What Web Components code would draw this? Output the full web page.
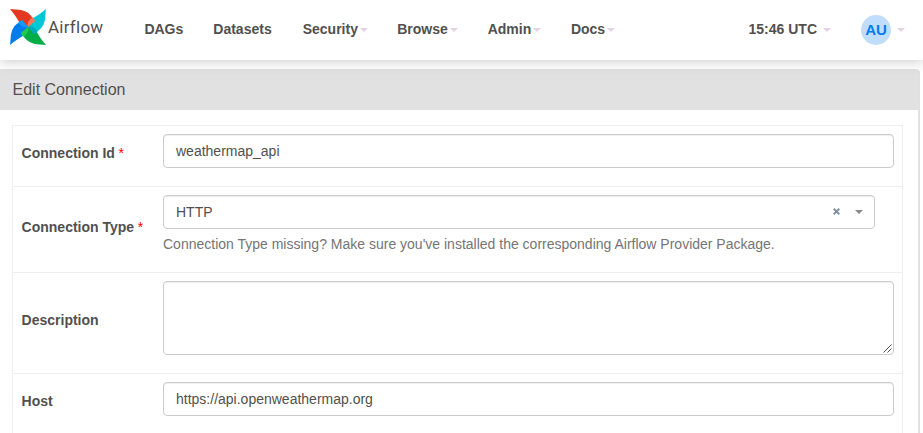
<!DOCTYPE html>
<html lang="en"><head><meta charset="utf-8"><title>Airflow</title>
<style>
html,body{margin:0;height:433px;overflow:hidden;background:#fff}
body{font:14px/20px "Liberation Sans",Arial,sans-serif;color:#51504f}
</style></head><body>
<af-app></af-app>
<script>
const define=(name,html,setup)=>customElements.define(name,class extends HTMLElement{
  constructor(){super();const t=document.createElement('template');t.innerHTML=html;
    this.attachShadow({mode:'open'}).append(t.content.cloneNode(true));}
  connectedCallback(){if(setup)setup(this,this.shadowRoot)}
});

define('af-logo',`<style>
:host{display:flex;align-items:center;width:135px;padding-left:10px;box-sizing:border-box;height:60px}
svg{width:36px;height:36px;flex:none;margin-top:-6px}
span{font:17px/20px Roboto,sans-serif;letter-spacing:.25px;margin:-6px 0 0 2px;white-space:nowrap}
</style>
<svg viewBox="-54 -54 108 108">
<defs><path id="b" d="M-54-54C-44-52-28-53-18-50C-2-46 8-38 15-25L0 0C-10-3-20-6-26-14C-34-28-42-40-54-54Z"/>
<path id="s" d="M0 0C-4-12 2-21 14-29C19-25 20-20 21-17C14-11 7-6 0 0Z"/></defs>
<use href="#b" fill="#e43921"/><use href="#b" fill="#00c7d4" transform="rotate(90)"/>
<use href="#b" fill="#00ad46" transform="rotate(180)"/><use href="#b" fill="#017cee" transform="rotate(270)"/>
<use href="#s" fill="#ff7557"/><use href="#s" fill="#00a9b5" transform="rotate(90)"/>
<use href="#s" fill="#22c94f" transform="rotate(180)"/><use href="#s" fill="#0c9cff" transform="rotate(270)"/>
</svg><span>Airflow</span>`);

define('af-caret',`<style>:host{display:block;width:0;height:0;border:4px solid transparent;border-top-color:var(--caret,#e5d2e4);border-bottom:0}</style>`);

define('af-nav-item',`<style>
:host{display:flex;align-items:center;font-weight:700;line-height:20px;white-space:nowrap}
af-caret{margin:2px 0 0 var(--gap,2px)}:host([plain]) af-caret{display:none}
</style><slot></slot><af-caret></af-caret>`);

define('af-avatar',`<style>:host{display:flex;align-items:center;justify-content:center;width:30px;height:30px;margin-top:2px;border-radius:50%;background:#c0defb;color:#017cee;font:700 15px/30px "Liberation Sans",Arial,sans-serif}</style><slot></slot>`);

define('af-navbar',`<style>
:host{display:flex;height:60px;background:#fff;box-shadow:0 2px 12px rgba(0,0,0,.2);position:relative;z-index:1}
nav{display:flex;gap:30px;padding-left:9.4px;align-items:center;height:58px}
.r{display:flex;align-items:center;height:58px;margin-left:auto;gap:30px;padding-right:18px;--gap:6px}
</style><af-logo></af-logo>
<nav><af-nav-item plain>DAGs</af-nav-item><af-nav-item plain>Datasets</af-nav-item><af-nav-item style="margin-left:1px">Security</af-nav-item><af-nav-item style="margin-left:-.8px">Browse</af-nav-item><af-nav-item>Admin</af-nav-item><af-nav-item style="margin-left:-.4px">Docs</af-nav-item></nav>
<div class="r"><af-nav-item>15:46 UTC</af-nav-item><af-nav-item><af-avatar>AU</af-avatar></af-nav-item></div>`);

define('af-panel',`<style>
:host{display:block;width:920px;height:380px;box-sizing:border-box;margin-top:9px;border-right:2px solid #e0e0e0;border-top-right-radius:4px}
header{height:41px;background:#e1e1e1;padding-left:12.5px;font-size:16px;line-height:42px;border-radius:0 3px 0 0}
main{padding:15px 15px 0 12px}
</style><header><slot name="title"></slot></header><main><slot></slot></main>`);

define('af-row',`<style>
:host{display:grid;grid-template-columns:150px 1fr;border:1px solid #eee;border-bottom:0;height:var(--h);box-sizing:border-box}
label{align-self:center;padding:0 0 6px 8.6px;font-weight:700;line-height:20px;white-space:nowrap}
i{font-style:normal;font-weight:400;color:red;font-size:14px;display:none;margin-left:-.3px}
:host([required]) i{display:inline}
div{padding:8px 8px 0 0}
</style><label><span></span> <i>*</i></label><div><slot></slot></div>`,(e,r)=>{
  r.querySelector('span').textContent=e.getAttribute('label');e.style.setProperty('--h',e.getAttribute('height')+'px')});

define('af-input',`<style>
:host{display:flex;align-items:center;box-sizing:border-box;height:34px;padding:0 12px;border:1px solid #ccc;border-radius:4px;box-shadow:inset 0 1px 1px rgba(0,0,0,.075);position:relative}
:host([area]){height:74px}svg{display:none;position:absolute;right:1px;bottom:1px}
:host([area]) svg{display:block}
</style><slot></slot><svg width="9" height="9" fill="none" stroke="#51504f"><path d="M.5 8.5l8-8M4.5 8.5l4-4"/></svg>`);

define('af-select',`<style>
:host{display:flex;align-items:center;box-sizing:border-box;height:34px;width:712px;padding:0 11px 0 12px;border:1px solid #ccc;border-radius:4px;box-shadow:inset 0 1px 1px rgba(0,0,0,.075);--caret:#888}
svg{margin:-1px 15px 0 auto}
</style><slot></slot><svg width="7" height="7" fill="none" stroke="#8292a3" stroke-width="2"><path d="M.7.7l5.6 5.6M6.3.7L.7 6.3"/></svg><af-caret></af-caret>`);

define('af-hint',`<style>:host{display:block;margin-top:5px;line-height:20px;color:#757575;white-space:nowrap}</style><slot></slot>`);

define('af-app',`<style>:host{display:block}</style>
<af-navbar></af-navbar>
<af-panel><span slot="title">Edit Connection</span>
<af-row label="Connection Id" required height="61"><af-input>weathermap_api</af-input></af-row>
<af-row label="Connection Type" required height="86"><af-select>HTTP</af-select><af-hint>Connection Type missing? Make sure you've installed the corresponding Airflow Provider Package.</af-hint></af-row>
<af-row label="Description" height="101"><af-input area></af-input></af-row>
<af-row label="Host" height="61"><af-input>https://api.openweathermap.org</af-input></af-row>
</af-panel>`);
</script></body></html>
